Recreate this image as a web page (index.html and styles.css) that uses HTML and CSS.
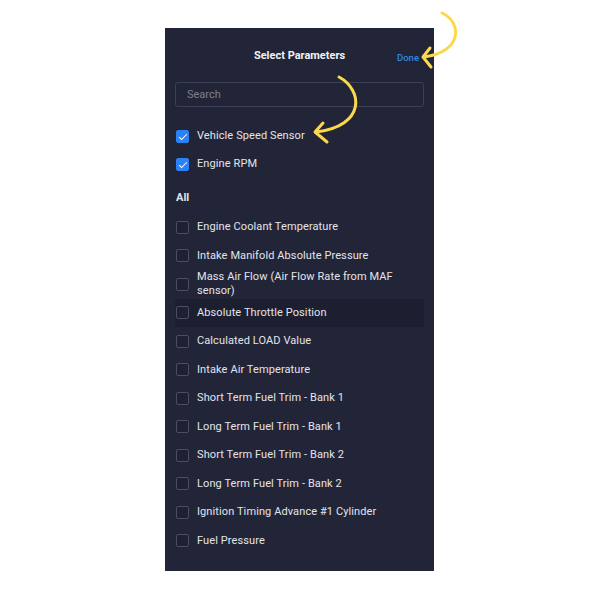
FILE: index.html
```html
<!DOCTYPE html>
<html lang="en">
  <head>
    <meta charset="UTF-8" />
    <title>Select Parameters</title>
    <link rel="stylesheet" href="styles.css">
  </head>
  <body>
    <!-- 参数选择面板 -->
    <div class="panel">
      <div class="header">
        <span class="title">Select Parameters</span>
        <a class="done" href="javascript:;">Done</a>
      </div>
      <div class="search">Search</div>

      <ul class="list selected">
        <li class="row"><span class="box checked"></span><span class="label">Vehicle Speed Sensor</span></li>
        <li class="row"><span class="box checked"></span><span class="label">Engine RPM</span></li>
      </ul>

      <div class="section">All</div>

      <ul class="list">
        <li class="row"><span class="box"></span><span class="label">Engine Coolant Temperature</span></li>
        <li class="row"><span class="box"></span><span class="label">Intake Manifold Absolute Pressure</span></li>
        <li class="row"><span class="box"></span><span class="label">Mass Air Flow (Air Flow Rate from MAF sensor)</span></li>
        <li class="row hover"><span class="box"></span><span class="label">Absolute Throttle Position</span></li>
        <li class="row"><span class="box"></span><span class="label">Calculated LOAD Value</span></li>
        <li class="row"><span class="box"></span><span class="label">Intake Air Temperature</span></li>
        <li class="row"><span class="box"></span><span class="label">Short Term Fuel Trim - Bank 1</span></li>
        <li class="row"><span class="box"></span><span class="label">Long Term Fuel Trim - Bank 1</span></li>
        <li class="row"><span class="box"></span><span class="label">Short Term Fuel Trim - Bank 2</span></li>
        <li class="row"><span class="box"></span><span class="label">Long Term Fuel Trim - Bank 2</span></li>
        <li class="row"><span class="box"></span><span class="label">Ignition Timing Advance #1 Cylinder</span></li>
        <li class="row"><span class="box"></span><span class="label">Fuel Pressure</span></li>
      </ul>
    </div>

    <!-- 黄色手绘箭头 -->
    <svg class="arrows" width="600" height="600" viewBox="0 0 600 600">
      <g fill="none" stroke="#fbd84c" stroke-width="3" stroke-linecap="round" stroke-linejoin="round">
        <path d="M442 13 C462 22 463 52 424 57" />
        <path d="M430 48 L423 57 L431 67" />
        <path d="M339 77 C363 90 366 126 316 132" />
        <path d="M323 123 L315 132 L327 142" />
      </g>
    </svg>
  </body>
</html>
```

FILE: styles.css
```css
* {
  margin: 0;
  padding: 0;
  box-sizing: border-box;
}
body {
  background-color: #ffffff;
  font-family: Roboto, "Liberation Sans", sans-serif;
  position: relative;
  width: 600px;
  height: 600px;
}
/* 面板 */
.panel {
  width: 269px;
  height: 543px;
  margin: 28px 0 0 165px;
  padding: 0 10px;
  background-color: #222538;
  color: #e3e4ea;
}
.header {
  height: 54px;
  display: flex;
  align-items: center;
  justify-content: center;
  position: relative;
}
.title {
  font-size: 11px;
  font-weight: 700;
  color: #f2f2f5;
}
.done {
  position: absolute;
  right: 5px;
  top: 24px;
  font-size: 9.5px;
  font-weight: 500;
  color: #2f86e6;
  text-decoration: none;
}
/* 搜索框 */
.search {
  height: 25px;
  border: 1px solid #3c3f55;
  border-radius: 3px;
  padding-left: 11px;
  font-size: 11px;
  line-height: 23px;
  color: #7c7f92;
}
.list {
  list-style: none;
}
.selected {
  margin-top: 15px;
}
.row {
  height: 28.5px;
  display: flex;
  align-items: center;
  padding-left: 1px;
}
.selected .row {
  height: 28px;
}
.row.hover {
  background-color: #1c1f30;
}
.label {
  font-size: 11px;
  line-height: 14px;
  margin-left: 8px;
  letter-spacing: 0.1px;
}
/* 复选框 */
.box {
  width: 13px;
  height: 13px;
  flex-shrink: 0;
  border: 1px solid #4a4d63;
  border-radius: 2px;
  background-color: #1e2132;
  position: relative;
}
.box.checked {
  background-color: #2b82f6;
  border-color: #2b82f6;
}
.box.checked::after {
  content: "";
  position: absolute;
  left: 3.5px;
  top: 1px;
  width: 3px;
  height: 7px;
  border-right: 1.6px solid #ffffff;
  border-bottom: 1.6px solid #ffffff;
  transform: rotate(45deg);
}
.section {
  height: 20px;
  margin-top: 10px;
  margin-bottom: 5px;
  padding-left: 1px;
  font-size: 11px;
  font-weight: 700;
  line-height: 20px;
}
.arrows {
  position: absolute;
  left: 0;
  top: 0;
  pointer-events: none;
}
```
